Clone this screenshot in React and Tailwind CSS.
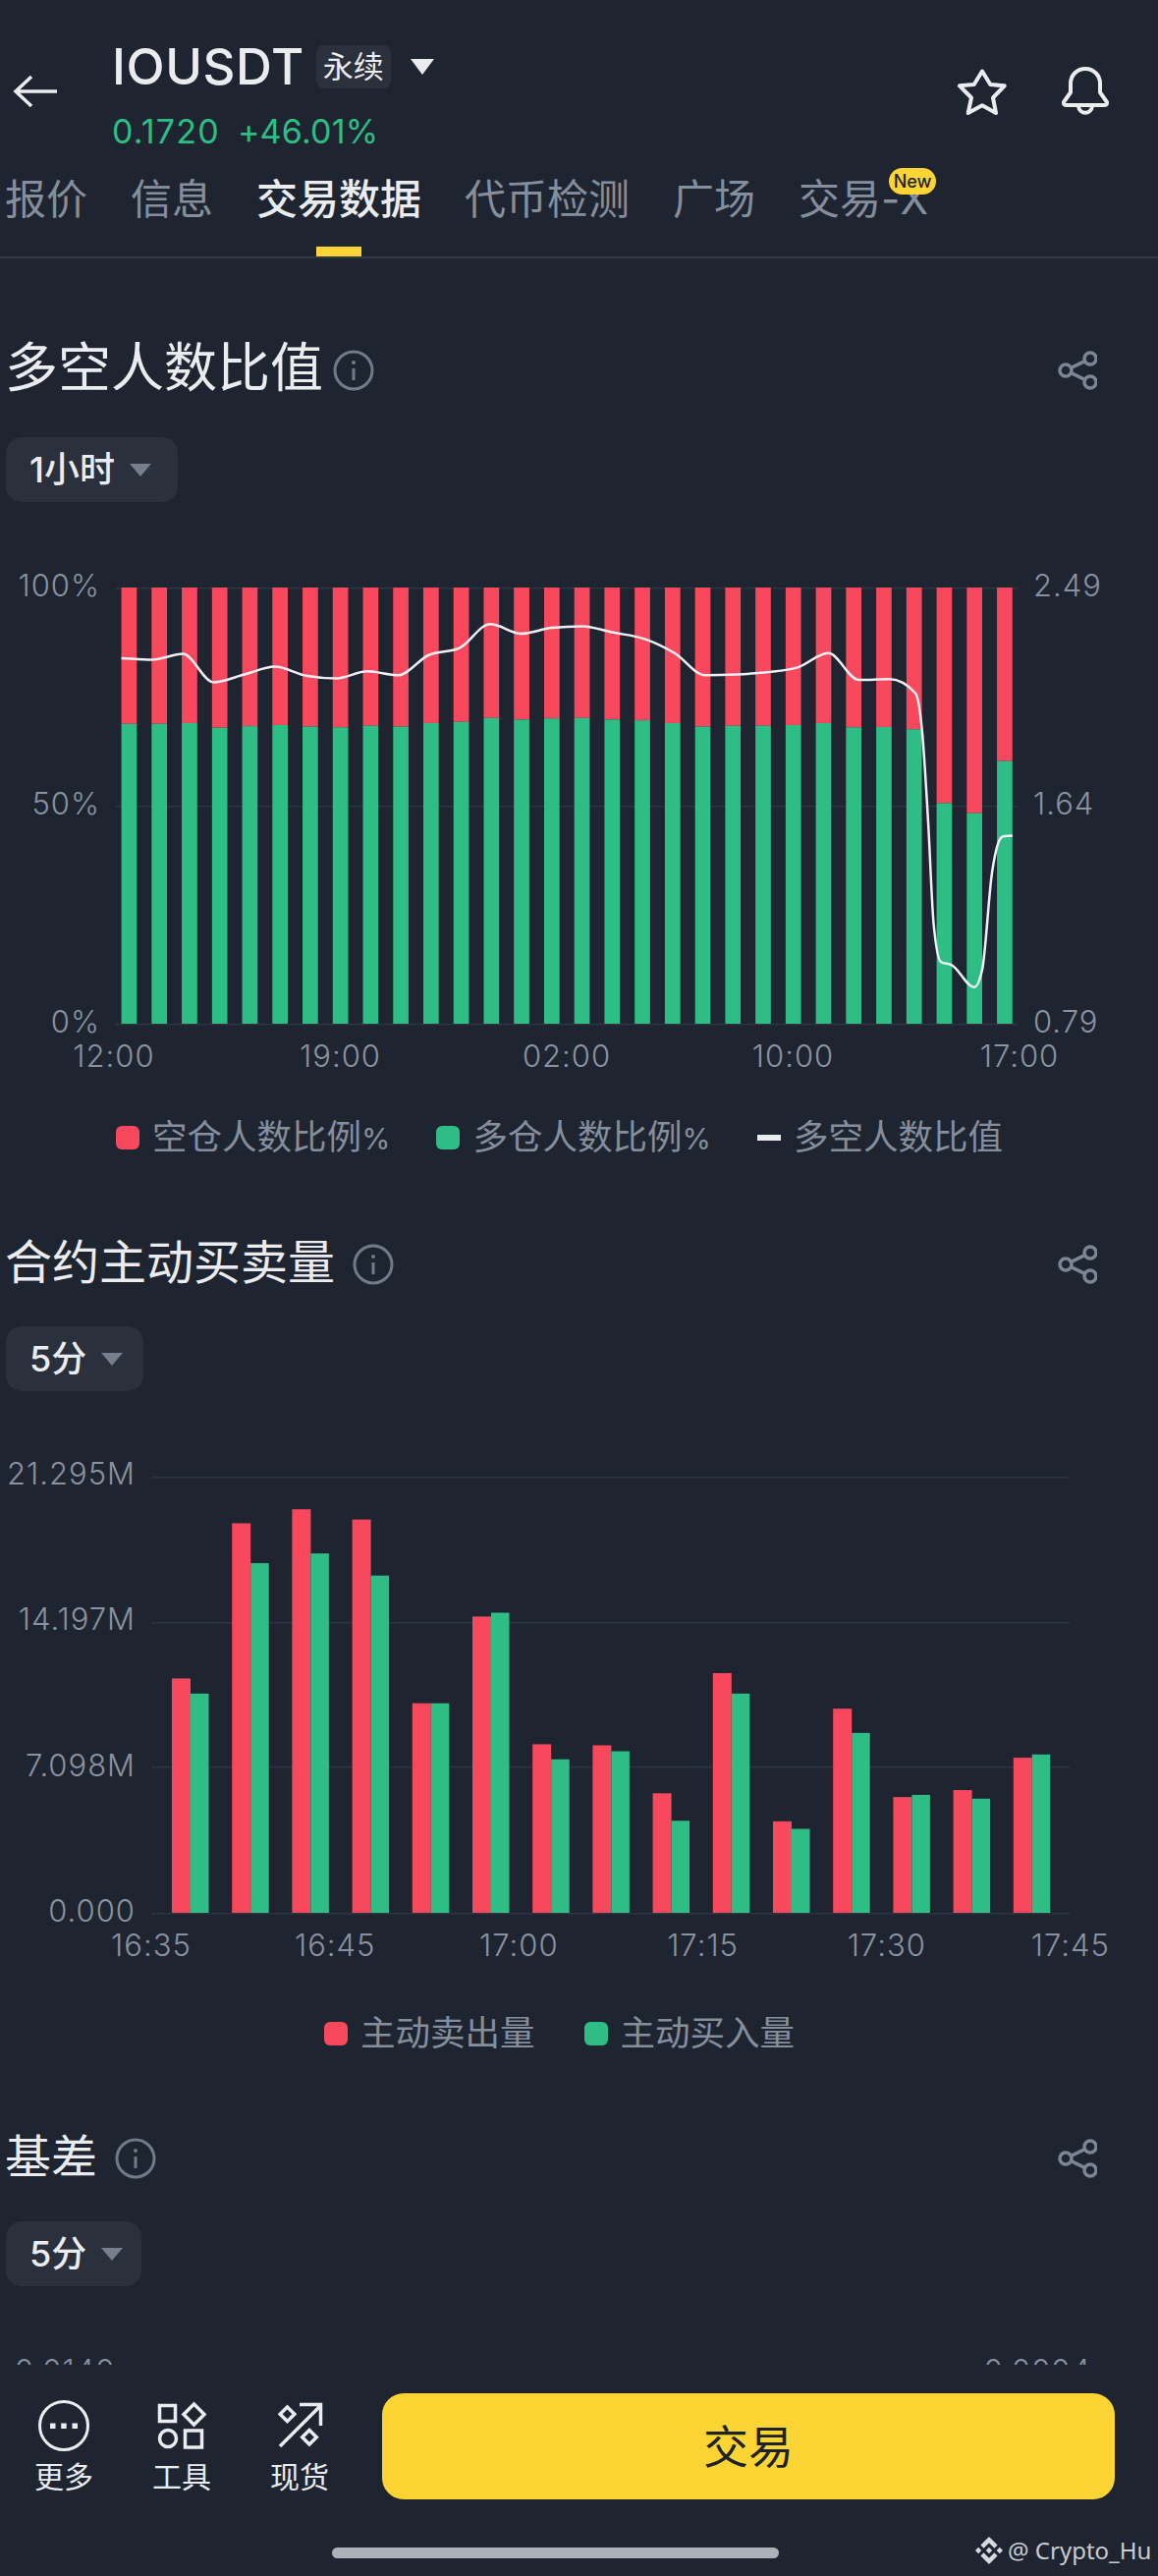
import React from "react";

const RED = "#f8485e";
const GREEN = "#2ebd85";
const GRID = "#2d3441";

const splitTops = [447,447,445,457,453,450,454,456,452,454,445,442,432,436,433,432,436,438,445,454,452,452,450,445,456,455,461,651,677,543];
const lineZ = [278,282,267,340,320,300,323,330,312,322,270,252,190,215,200,196,212,228,265,322,320,314,302,265,334,332];
const toY1 = (v) => 560 + v / 2.529 - 598;

const linePts = [
  ...lineZ.map((v, i) => [6.6 + i * 31.29, toY1(v)]),
  [815, toY1(368)],
  [822, toY1(470)],
  [828, toY1(700)],
  [833.5, toY1(960)],
  [841, toY1(1060)],
  [852, toY1(1068)],
  [875, toY1(1125)],
  [883, toY1(1080)],
  [893, toY1(830)],
  [898.5, toY1(760)],
  [904, toY1(737)],
  [914, toY1(735)],
];

function monotonePath(pts) {
  const n = pts.length;
  const dx = [], s = [];
  for (let i = 0; i < n - 1; i++) {
    dx[i] = pts[i + 1][0] - pts[i][0];
    s[i] = (pts[i + 1][1] - pts[i][1]) / dx[i];
  }
  const t = [s[0]];
  for (let i = 1; i < n - 1; i++) {
    if (s[i - 1] * s[i] <= 0) t[i] = 0;
    else {
      const p = (s[i - 1] * dx[i] + s[i] * dx[i - 1]) / (dx[i - 1] + dx[i]);
      t[i] = (Math.sign(s[i - 1]) + Math.sign(s[i])) * Math.min(Math.abs(s[i - 1]), Math.abs(s[i]), 0.5 * Math.abs(p));
    }
  }
  t[n - 1] = s[n - 2];
  let d = `M${pts[0][0]} ${pts[0][1]}`;
  for (let i = 0; i < n - 1; i++) {
    const h = dx[i] / 3;
    d += `C${pts[i][0] + h} ${pts[i][1] + t[i] * h} ${pts[i + 1][0] - h} ${pts[i + 1][1] - t[i + 1] * h} ${pts[i + 1][0]} ${pts[i + 1][1]}`;
  }
  return d;
}

const sellTops = [854,566,540,559,900,739,976,978,1067,844,1119,910,1074,1061,1001];
const buyTops = [882,640,622,663,900,732,1004,989,1118,882,1133,955,1070,1077,995];
const toY2 = (v) => 1240 + v / 1.823 - 1503;

function Info() {
  return (
    <svg width="42" height="42" viewBox="0 0 42 42" fill="none" className="shrink-0">
      <circle cx="21" cy="21" r="19" stroke="#717a88" strokeWidth="3" />
      <circle cx="21" cy="13" r="2" fill="#717a88" />
      <path d="M21 19V31" stroke="#717a88" strokeWidth="3" />
    </svg>
  );
}

function Share() {
  return (
    <svg width="40" height="40" viewBox="0 0 40 40" fill="none" stroke="#7c8593" strokeWidth="3.5" className="mt-[4px]">
      <circle cx="8" cy="20" r="6" />
      <circle cx="33" cy="8" r="6" />
      <circle cx="33" cy="32" r="6" />
      <path d="M13.5 17.3L27.5 10.7M13.5 22.7L27.5 29.3" />
    </svg>
  );
}

function Title({ text, size, gap }) {
  return (
    <div className="flex items-center justify-between h-[60px] pl-[5px] pr-[62px]">
      <div className="flex items-center">
        <span className={`text-[#eaecef] leading-[60px] ${size}`}>{text}</span>
        <span className={`mt-[4px] ${gap}`}><Info /></span>
      </div>
      <Share />
    </div>
  );
}

function Pill({ label, width }) {
  return (
    <div className={`h-[66px] ml-[6px] rounded-[16px] bg-[#2a303c] flex items-center pl-[24px] gap-[14px] ${width}`}>
      <span className="text-[36px] leading-[40px] font-medium text-[#eaecef]">{label}</span>
      <svg width="24" height="15" viewBox="0 0 24 15"><path d="M1 1H23L12 14Z" fill="#777f8c" /></svg>
    </div>
  );
}

function LegendItem({ color, children }) {
  return (
    <div className="flex items-center gap-[13px] h-[40px]">
      <span className="w-[24px] h-[24px] rounded-[6px]" style={{ backgroundColor: color }} />
      <span className="text-[35.5px] leading-[40px] text-[#848e9c]">{children}</span>
    </div>
  );
}

function AxisCol({ items, className }) {
  return (
    <div className={`flex flex-col justify-between text-[31px] leading-[36px] font-light tracking-[1px] text-[#8a92a0] ${className}`}>
      {items.map((t) => <span key={t}>{t}</span>)}
    </div>
  );
}

function XAxis({ items, className }) {
  return (
    <div className={`flex justify-between text-[31px] leading-[36px] font-light tracking-[1px] text-[#8a92a0] ${className}`}>
      {items.map((t) => <span key={t} className="w-[120px] text-center">{t}</span>)}
    </div>
  );
}

function Tool({ icon, label }) {
  return (
    <div className="w-[120px] pt-[7px] flex flex-col items-center">
      <div className="h-[52px] flex items-center justify-center">{icon}</div>
      <span className="mt-[8px] text-[30px] leading-[36px] text-[#eaecef]">{label}</span>
    </div>
  );
}

export default function App() {
  const tabs = ["报价", "信息", "交易数据", "代币检测", "广场", "交易-X"];
  return (
    <div className="relative w-[1179px] h-[2622px] overflow-hidden bg-[#1e2530] font-[Inter,'Noto_Sans_CJK_SC',sans-serif]">
      <div className="h-[2407px] overflow-hidden">
        {/* header */}
        <div className="h-[263px] border-b-2 border-[#333a46]">
          <div className="flex pt-[46px] h-[170px]">
            <svg width="45" height="34" viewBox="0 0 45 34" fill="none" stroke="#eaecef" strokeWidth="3.5" className="ml-[13px] mt-[30px] shrink-0">
              <path d="M3 17H45M19 2L3 17L19 32" />
            </svg>
            <div className="ml-[56px] flex-1">
              <div className="flex items-center h-[44px]">
                <span className="text-[51px] leading-[44px] font-medium text-[#eaecef] tracking-[0.6px]">IOUSDT</span>
                <span className="ml-[12px] w-[76px] h-[44px] rounded-[8px] bg-[#2a303c] text-[31px] leading-[44px] text-center text-[#eaecef]">永续</span>
                <svg width="26" height="18" viewBox="0 0 26 18" className="ml-[19px]"><path d="M1 1H25L13 17Z" fill="#eaecef" /></svg>
              </div>
              <div className="mt-[26px] flex gap-[18px] text-[34px] leading-[36px] text-[#2ebd85]">
                <span className="tracking-[1.2px]">0.1720</span>
                <span className="tracking-[0.2px]">+46.01%</span>
              </div>
            </div>
            <div className="flex items-start pr-[49px] gap-[55px] pt-[21px]">
              <svg width="50" height="47" viewBox="0 0 50 47" fill="none" stroke="#eaecef" strokeWidth="4" strokeLinejoin="round" className="mt-[3px]">
                <path d="M25 2.5L33.3 16L47.7 17.3L36 29.5L39 45L25 37.3L10.7 45L14 29.5L2 17.3L16.7 16Z" />
              </svg>
              <svg width="50" height="52" viewBox="0 0 50 52" fill="none" stroke="#eaecef" strokeWidth="4" strokeLinejoin="round">
                <path d="M25 3C16 3 10 10 10 18V27L3 37Q2.5 40 6 40H44Q47.5 40 47 37L40 27V18C40 10 34 3 25 3Z" />
                <path d="M18 41C19 50 31 50 32 41" />
              </svg>
            </div>
          </div>
          <div className="relative flex gap-[44px] pl-[5px] h-[91px] text-[42px] leading-[66px] text-[#848e9c]">
            {tabs.map((t, i) => (
              <div key={t} className={`relative h-full ${i === 2 ? "text-[#eaecef] font-medium" : ""}`}>
                {t}
                {i === 2 && <span className="absolute left-[61px] bottom-0 w-[46px] h-[10px] bg-[#fcd535]" />}
                {i === 5 && (
                  <span className="absolute left-[92px] top-[1px] w-[48px] h-[27px] rounded-full bg-[#fcd535] text-[18px] leading-[27px] font-medium text-center text-[#1e2329]">New</span>
                )}
              </div>
            ))}
          </div>
        </div>

        {/* long short ratio */}
        <div className="mt-[82px]"><Title text="多空人数比值" size="text-[54px]" gap="ml-[10px]" /></div>
        <div className="mt-[40px]"><Pill label="1小时" width="w-[175px]" /></div>
        <div className="mt-[67px] flex items-start h-[480px]">
          <AxisCol items={["100%", "50%", "0%"]} className="w-[102px] h-[480px] items-end" />
          <svg width="919" height="446" viewBox="0 0 919 446" className="ml-[15px] mt-[20px] shrink-0">
            {[0, 222, 444].map((y) => <rect key={y} x="0" y={y} width="919" height="1.5" fill={GRID} />)}
            {splitTops.map((v, i) => {
              const x = 6.6 + i * 30.74;
              const y = toY1(v);
              return (
                <g key={i}>
                  <rect x={x} y="0" width="15.7" height={y} fill={RED} />
                  <rect x={x} y={y} width="15.7" height={444 - y} fill={GREEN} />
                </g>
              );
            })}
            <path d={monotonePath(linePts)} fill="none" stroke="#eef0f4" strokeWidth="2.5" />
          </svg>
          <AxisCol items={["2.49", "1.64", "0.79"]} className="ml-[16px] h-[480px]" />
        </div>
        <XAxis items={["12:00", "19:00", "02:00", "10:00", "17:00"]} className="-mt-[1px] ml-[56px] w-[1042px]" />
        <div className="mt-[45px] h-[40px] flex items-center pl-[118px] gap-[47px]">
          <LegendItem color={RED}>空仓人数比例<span className="text-[30px] leading-none">%</span></LegendItem>
          <LegendItem color={GREEN}>多仓人数比例<span className="text-[30px] leading-none">%</span></LegendItem>
          <div className="flex items-center gap-[13px]">
            <span className="w-[24px] h-[6px] bg-[#eaecef]" />
            <span className="text-[35.5px] leading-[40px] text-[#848e9c]">多空人数比值</span>
          </div>
        </div>

        {/* taker volume */}
        <div className="mt-[77px]"><Title text="合约主动买卖量" size="text-[48px]" gap="ml-[18px]" /></div>
        <div className="mt-[35px]"><Pill label="5分" width="w-[140px]" /></div>
        <div className="mt-[66px] flex items-start h-[481px]">
          <AxisCol items={["21.295M", "14.197M", "7.098M", "0.000"]} className="w-[138px] h-[481px] items-end" />
          <svg width="935" height="446" viewBox="0 0 935 446" className="ml-[16px] mt-[21px] shrink-0">
            {[0, 148, 295, 444].map((y) => <rect key={y} x="0" y={y} width="935" height="1.5" fill={GRID} />)}
            {sellTops.map((v, i) => {
              const x = 21 + i * 61.2;
              const a = toY2(v);
              const b = toY2(buyTops[i]);
              return (
                <g key={i}>
                  <rect x={x} y={a} width="19" height={444 - a} fill={RED} />
                  <rect x={x + 19} y={b} width="18.5" height={444 - b} fill={GREEN} />
                </g>
              );
            })}
          </svg>
        </div>
        <XAxis items={["16:35", "16:45", "17:00", "17:15", "17:30", "17:45"]} className="-mt-[1px] ml-[94px] w-[1056px]" />
        <div className="mt-[52px] flex items-center pl-[330px] gap-[50px]">
          <LegendItem color={RED}>主动卖出量</LegendItem>
          <LegendItem color={GREEN}>主动买入量</LegendItem>
        </div>

        {/* basis */}
        <div className="mt-[75px]"><Title text="基差" size="text-[47px]" gap="ml-[18px]" /></div>
        <div className="mt-[36px]"><Pill label="5分" width="w-[138px]" /></div>
        <div className="mt-[68px] flex justify-between pl-[15px] pr-[68px] text-[31px] leading-[36px] font-light tracking-[1px] text-[#8a92a0]">
          <span>0.0140</span>
          <span>0.0004</span>
        </div>
      </div>

      {/* bottom bar */}
      <div className="pt-[29px]">
        <div className="flex pl-[5px]">
          <Tool
            label="更多"
            icon={
              <svg width="52" height="52" viewBox="0 0 52 52" fill="none">
                <circle cx="26" cy="26" r="24.5" stroke="#eaecef" strokeWidth="3" />
                <rect x="12" y="23.5" width="5.5" height="5.5" fill="#eaecef" />
                <rect x="23.2" y="23.5" width="5.5" height="5.5" fill="#eaecef" />
                <rect x="34.5" y="23.5" width="5.5" height="5.5" fill="#eaecef" />
              </svg>
            }
          />
          <Tool
            label="工具"
            icon={
              <svg width="52" height="52" viewBox="0 0 52 52" fill="none" stroke="#eaecef" strokeWidth="3.5">
                <rect x="3.5" y="5.5" width="16" height="16" />
                <path d="M38.5 4L49 14.5L38.5 25L28 14.5Z" />
                <circle cx="12" cy="39" r="8.5" />
                <rect x="29.5" y="31" width="17" height="17" />
              </svg>
            }
          />
          <Tool
            label="现货"
            icon={
              <svg width="50" height="50" viewBox="0 0 50 50" fill="none" stroke="#eaecef" strokeWidth="3.5">
                <path d="M5 46L46 5M25 3.5H46.5V25" />
                <path d="M12.5 6L19.8 13.3L12.5 20.6L5.2 13.3Z" />
                <path d="M35 29.5L42.3 36.8L35 44.1L27.7 36.8Z" />
              </svg>
            }
          />
          <button className="ml-[24px] w-[746px] h-[108px] rounded-[22px] bg-[#fcd535] text-[46px] leading-[104px] text-[#1e2329]">交易</button>
        </div>
        <div className="mt-[49px] ml-[338px] w-[455px] h-[11px] rounded-full bg-[#adb1b8]" />
      </div>

      {/* watermark */}
      <div className="absolute left-[993px] top-[2581px] flex items-center gap-[5px] h-[30px] whitespace-nowrap">
        <svg width="28" height="28" viewBox="0 0 24 24" fill="#d7dae0" className="shrink-0">
          <path d="M16.624 13.9202l2.7175 2.7154-7.353 7.353-7.353-7.352 2.7175-2.7164 4.6355 4.6595 4.6356-4.6595zm4.6366-4.6366L24 12l-2.7154 2.7164L18.5682 12l2.6924-2.7164zm-9.272.001l2.7163 2.6914-2.7164 2.7174v-.001L9.2721 12l2.7164-2.7154zm-9.2722-.001L5.4088 12l-2.6914 2.6934L0 12l2.7164-2.7164zM11.9885.0115l7.353 7.329-2.7174 2.7154-4.6356-4.6356-4.6355 4.6595-2.7174-2.7154 7.353-7.353z" />
        </svg>
        <span className="text-[24px] leading-[30px] text-[#c9ccd2] font-['Noto_Sans',sans-serif]">@ Crypto_Hu</span>
      </div>
    </div>
  );
}
